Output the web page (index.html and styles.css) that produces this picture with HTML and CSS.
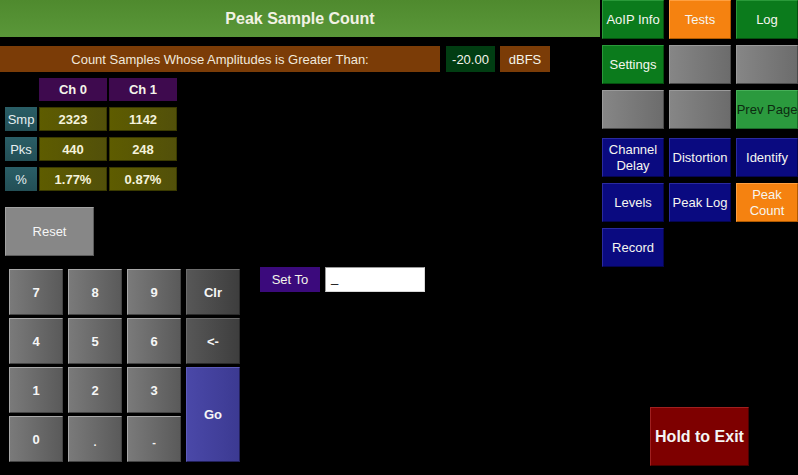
FILE: index.html
```html
<!DOCTYPE html>
<html>
<head>
<meta charset="utf-8">
<title>Peak Sample Count</title>
<link rel="stylesheet" href="styles.css">
</head>
<body>
<div class="screen">
  <main class="left">
    <header class="title">Peak Sample Count</header>
    <div class="threshold">
      <div class="th-label">Count Samples Whose Amplitudes is Greater Than:</div>
      <div class="th-value">-20.00</div>
      <div class="th-unit">dBFS</div>
    </div>
    <div class="table">
      <div class="blank"></div>
      <div class="colhead">Ch 0</div>
      <div class="colhead">Ch 1</div>
      <div class="rowhead">Smp</div>
      <div class="cell">2323</div>
      <div class="cell">1142</div>
      <div class="rowhead">Pks</div>
      <div class="cell">440</div>
      <div class="cell">248</div>
      <div class="rowhead">%</div>
      <div class="cell">1.77%</div>
      <div class="cell">0.87%</div>
    </div>
    <div class="reset">Reset</div>
    <div class="entry">
      <div class="keypad">
        <div class="key">7</div>
        <div class="key">8</div>
        <div class="key">9</div>
        <div class="key dark">Clr</div>
        <div class="key">4</div>
        <div class="key">5</div>
        <div class="key">6</div>
        <div class="key dark">&lt;-</div>
        <div class="key">1</div>
        <div class="key">2</div>
        <div class="key">3</div>
        <div class="key go">Go</div>
        <div class="key">0</div>
        <div class="key small">.</div>
        <div class="key small">-</div>
      </div>
      <div class="setto">
        <div class="setto-label">Set To</div>
        <div class="setto-input">_</div>
      </div>
    </div>
  </main>
  <aside class="nav">
    <div class="navgrid">
      <div class="nb green">AoIP Info</div>
      <div class="nb orange">Tests</div>
      <div class="nb green">Log</div>
      <div class="nb green">Settings</div>
      <div class="nb gray"></div>
      <div class="nb gray"></div>
      <div class="nb gray"></div>
      <div class="nb gray"></div>
      <div class="nb lightgreen">Prev Page</div>
    </div>
    <div class="navgrid">
      <div class="nb blue">Channel<br>Delay</div>
      <div class="nb blue">Distortion</div>
      <div class="nb blue">Identify</div>
      <div class="nb blue">Levels</div>
      <div class="nb blue">Peak Log</div>
      <div class="nb orange">Peak<br>Count</div>
      <div class="nb blue">Record</div>
    </div>
    <div class="exit">Hold to Exit</div>
  </aside>
</div>
</body>
</html>
```

FILE: styles.css
```css
html, body {
  margin: 0;
  padding: 0;
  background: #000;
}
body {
  font-family: "Liberation Sans", Arial, sans-serif;
  color: #f4f4ea;
}
.screen {
  width: 798px;
  height: 475px;
  display: flex;
  gap: 2px;
  overflow: hidden;
}
.left {
  width: 600px;
  display: flex;
  flex-direction: column;
}
.title {
  height: 37px;
  background: linear-gradient(180deg, #4f8a2e 0%, #5a9739 100%);
  display: flex;
  align-items: center;
  justify-content: center;
  font-weight: bold;
  font-size: 16px;
  color: #f2f2e4;
}
.threshold {
  margin-top: 9px;
  height: 26px;
  display: flex;
  font-size: 13px;
}
.th-label {
  width: 440px;
  background: #7b3c07;
  display: flex;
  align-items: center;
  justify-content: center;
  color: #f0e8dc;
}
.th-value {
  margin-left: 6px;
  width: 49px;
  background: #013d12;
  display: flex;
  align-items: center;
  justify-content: center;
}
.th-unit {
  margin-left: 5px;
  width: 50px;
  background: #7b3c07;
  display: flex;
  align-items: center;
  justify-content: center;
}
.table {
  margin-top: 6px;
  margin-left: 5px;
  display: grid;
  grid-template-columns: 32px 68px 68px;
  grid-template-rows: 23px 24px 24px 24px;
  column-gap: 2px;
  row-gap: 6px;
  font-size: 13px;
}
.colhead {
  background: #3e0a4e;
  display: flex;
  align-items: center;
  justify-content: center;
  font-weight: bold;
}
.rowhead {
  background: linear-gradient(180deg, #2a5e66, #234f56);
  display: flex;
  align-items: center;
  justify-content: center;
  color: #e6eef0;
}
.cell {
  background: linear-gradient(90deg, #5e5c00, #52500a);
  border: 1px solid #3a3a00;
  display: flex;
  align-items: center;
  justify-content: center;
  font-weight: bold;
  color: #f4f2dc;
}
.reset {
  margin-top: 16px;
  margin-left: 5px;
  width: 87px;
  height: 47px;
  background: #878787;
  border: 1px solid #a2a2a2;
  border-right-color: #5c5c5c;
  border-bottom-color: #5c5c5c;
  display: flex;
  align-items: center;
  justify-content: center;
  font-size: 13px;
  color: #f6f6f6;
}
.entry {
  margin-top: 13px;
  display: flex;
  align-items: flex-start;
}
.keypad {
  margin-left: 9px;
  display: grid;
  grid-template-columns: repeat(4, 54px);
  grid-template-rows: repeat(4, 46px);
  column-gap: 5px;
  row-gap: 3px;
}
.key {
  box-sizing: border-box;
  background: linear-gradient(90deg, #7a7a7a, #5a5a5a);
  border: 1px solid #a8a8a8;
  border-right-color: #444;
  border-bottom-color: #444;
  display: flex;
  align-items: center;
  justify-content: center;
  font-weight: bold;
  font-size: 13px;
  color: #f6f6f6;
}
.key.dark {
  background: linear-gradient(90deg, #575757, #3e3e3e);
  border-color: #6c6c6c #2a2a2a #2a2a2a #6c6c6c;
}
.key.small {
  font-size: 11px;
  padding-top: 6px;
}
.key.go {
  grid-column: 4;
  grid-row: 3 / span 2;
  background: linear-gradient(90deg, #4a48a8, #3c3a92);
  border-color: #5e5cba #22205a #22205a #5e5cba;
}
.setto {
  margin-left: 20px;
  margin-top: -2px;
  display: flex;
  gap: 5px;
}
.setto-label {
  width: 60px;
  height: 25px;
  background: #3b0a7c;
  display: flex;
  align-items: center;
  justify-content: center;
  font-size: 13px;
}
.setto-input {
  box-sizing: border-box;
  width: 100px;
  height: 25px;
  background: #fff;
  border: 1px solid #9a9a9a;
  border-right-color: #d8d8d8;
  border-bottom-color: #d8d8d8;
  color: #000;
  font-size: 13px;
  padding-left: 5px;
  line-height: 19px;
}
.nav {
  width: 196px;
  display: flex;
  flex-direction: column;
}
.navgrid {
  display: grid;
  grid-template-columns: repeat(3, 62px);
  grid-auto-rows: 39px;
  column-gap: 5px;
  row-gap: 6px;
}
.navgrid + .navgrid {
  margin-top: 9px;
}
.nb {
  box-sizing: border-box;
  display: flex;
  align-items: center;
  justify-content: center;
  text-align: center;
  font-size: 13px;
  line-height: 16px;
  color: #f6f6f0;
  white-space: nowrap;
  border: 1px solid;
}
.nb.green {
  background: #0b7b1c;
  border-color: #2a9a3a #05500f #05500f #2a9a3a;
}
.nb.lightgreen {
  background: #2b9a3e;
  border-color: #46b058 #1a6a28 #1a6a28 #46b058;
  color: #0c2a10;
}
.nb.orange {
  background: #f58210;
  border-color: #ffa040 #b05a00 #b05a00 #ffa040;
}
.nb.gray {
  background: linear-gradient(90deg, #868686, #6c6c6c);
  border-color: #9a9a9a #4a4a4a #4a4a4a #9a9a9a;
}
.nb.blue {
  background: #0a0a80;
  border-color: #2a2aa0 #050550 #050550 #2a2aa0;
}
.exit {
  margin-top: 140px;
  margin-left: 48px;
  box-sizing: border-box;
  width: 99px;
  height: 59px;
  background: #7e0000;
  border: 1px solid #a02020;
  border-right-color: #4a0000;
  border-bottom-color: #4a0000;
  display: flex;
  align-items: center;
  justify-content: center;
  font-weight: bold;
  font-size: 16px;
  color: #f4f4f4;
}
```
